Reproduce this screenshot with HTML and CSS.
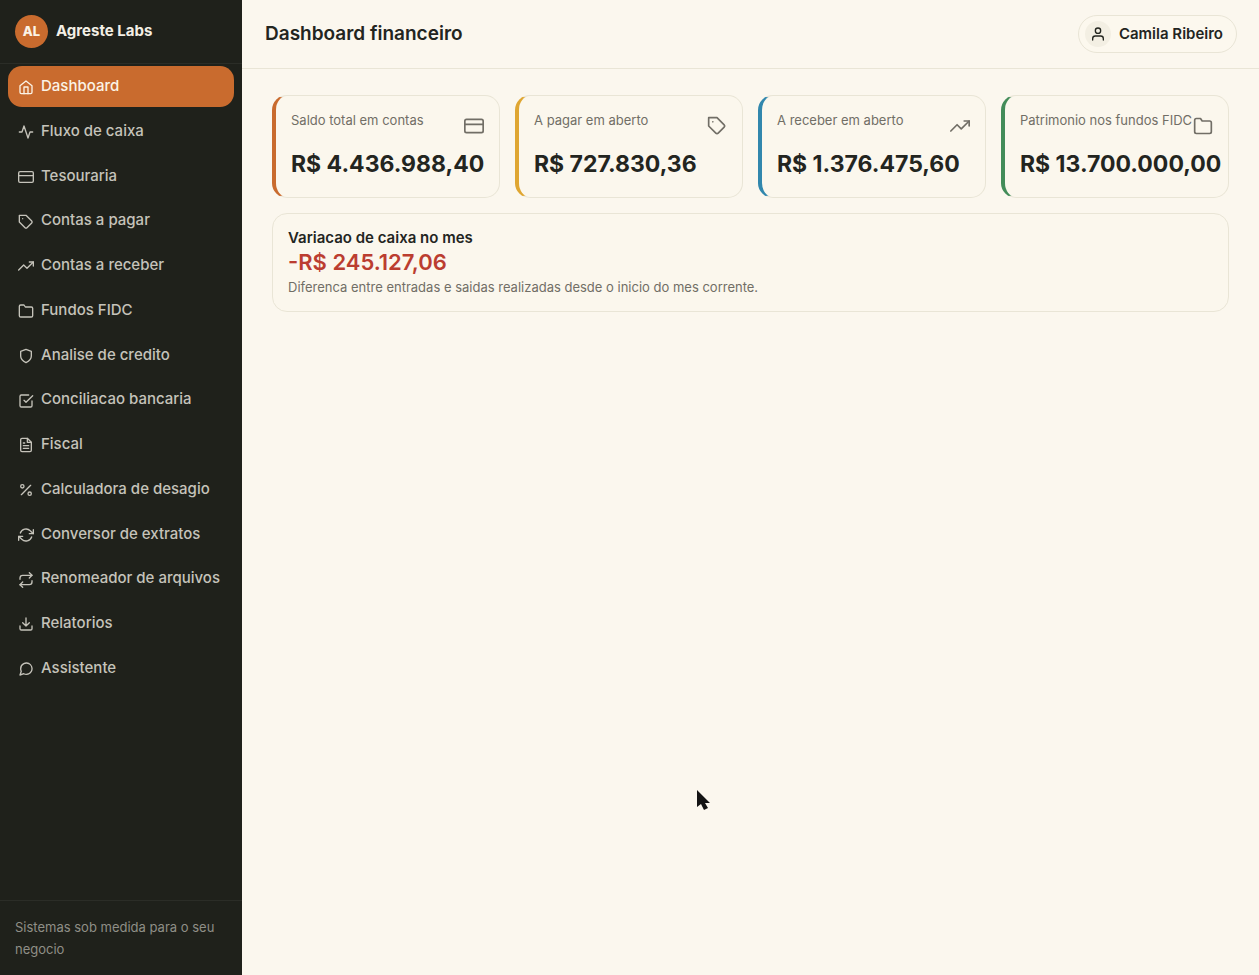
FILE: index.html
```html
<!DOCTYPE html>
<html lang="pt-BR">
<head>
  <meta charset="UTF-8" />
  <meta name="viewport" content="width=device-width, initial-scale=1.0" />
  <title>Dashboard financeiro - Agreste Labs</title>
  <link rel="stylesheet" href="styles.css">
</head>
<body>
  <div class="app">
    <aside class="sidebar">
      <div class="brand">
        <span class="brand-logo">AL</span>
        <span class="brand-name">Agreste Labs</span>
      </div>
      <nav class="nav">
        <a class="nav-link active" href="#dashboard" aria-current="page">
          <svg class="icon" viewBox="0 0 24 24"><path d="M3 10l9-7 9 7v10a2 2 0 0 1-2 2H5a2 2 0 0 1-2-2z"/><path d="M9 22V12h6v10"/></svg>
          Dashboard
        </a>
        <a class="nav-link" href="#fluxo">
          <svg class="icon" viewBox="0 0 24 24"><path d="M22 12h-4l-3 9L9 3l-3 9H2"/></svg>
          Fluxo de caixa
        </a>
        <a class="nav-link" href="#tesouraria">
          <svg class="icon" viewBox="0 0 24 24"><rect x="1" y="4" width="22" height="16" rx="2"/><path d="M1 10h22"/></svg>
          Tesouraria
        </a>
        <a class="nav-link" href="#pagar">
          <svg class="icon" viewBox="0 0 24 24"><path d="M20.59 13.41l-7.17 7.17a2 2 0 0 1-2.83 0L2 12V2h10l8.59 8.59a2 2 0 0 1 0 2.82z"/><path d="M7 7h.01"/></svg>
          Contas a pagar
        </a>
        <a class="nav-link" href="#receber">
          <svg class="icon" viewBox="0 0 24 24"><path d="M23 6l-9.500 9.500-5-5L1 18"/><path d="M17 6h6v6"/></svg>
          Contas a receber
        </a>
        <a class="nav-link" href="#fundos">
          <svg class="icon" viewBox="0 0 24 24"><path d="M22 19a2 2 0 0 1-2 2H4a2 2 0 0 1-2-2V5a2 2 0 0 1 2-2h5l2 3h9a2 2 0 0 1 2 2z"/></svg>
          Fundos FIDC
        </a>
        <a class="nav-link" href="#credito">
          <svg class="icon" viewBox="0 0 24 24"><path d="M12 22s8-4 8-10V5l-8-3-8 3v7c0 6 8 10 8 10z"/></svg>
          Analise de credito
        </a>
        <a class="nav-link" href="#conciliacao">
          <svg class="icon" viewBox="0 0 24 24"><path d="M9 11l3 3L22 4"/><path d="M21 12v7a2 2 0 0 1-2 2H5a2 2 0 0 1-2-2V5a2 2 0 0 1 2-2h11"/></svg>
          Conciliacao bancaria
        </a>
        <a class="nav-link" href="#fiscal">
          <svg class="icon" viewBox="0 0 24 24"><path d="M14 2H6a2 2 0 0 0-2 2v16a2 2 0 0 0 2 2h12a2 2 0 0 0 2-2V8z"/><path d="M14 2v6h6M16 13H8M16 17H8M10 9H8"/></svg>
          Fiscal
        </a>
        <a class="nav-link" href="#desagio">
          <svg class="icon" viewBox="0 0 24 24"><path d="M19 5L5 19"/><circle cx="6.500" cy="6.500" r="2.500"/><circle cx="17.500" cy="17.500" r="2.500"/></svg>
          Calculadora de desagio
        </a>
        <a class="nav-link" href="#extratos">
          <svg class="icon" viewBox="0 0 24 24"><path d="M23 4v6h-6M1 20v-6h6"/><path d="M3.510 9a9 9 0 0 1 14.850-3.360L23 10M1 14l4.640 4.360A9 9 0 0 0 20.490 15"/></svg>
          Conversor de extratos
        </a>
        <a class="nav-link" href="#arquivos">
          <svg class="icon" viewBox="0 0 24 24"><path d="M17 1l4 4-4 4"/><path d="M3 11V9a4 4 0 0 1 4-4h14M7 23l-4-4 4-4"/><path d="M21 13v2a4 4 0 0 1-4 4H3"/></svg>
          Renomeador de arquivos
        </a>
        <a class="nav-link" href="#relatorios">
          <svg class="icon" viewBox="0 0 24 24"><path d="M21 15v4a2 2 0 0 1-2 2H5a2 2 0 0 1-2-2v-4M7 10l5 5 5-5M12 15V3"/></svg>
          Relatorios
        </a>
        <a class="nav-link" href="#assistente">
          <svg class="icon" viewBox="0 0 24 24"><path d="M21 11.500a8.380 8.380 0 0 1-.9 3.800 8.500 8.500 0 0 1-7.600 4.700 8.380 8.380 0 0 1-3.800-.9L3 21l1.900-5.700a8.380 8.380 0 0 1-.9-3.800 8.500 8.500 0 0 1 4.700-7.600 8.380 8.380 0 0 1 3.800-.9h.5a8.480 8.480 0 0 1 8 8z"/></svg>
          Assistente
        </a>
      </nav>
      <div class="sidebar-footer">Sistemas sob medida para o seu negocio</div>
    </aside>

    <div class="main">
      <header class="topbar">
        <h1>Dashboard financeiro</h1>
        <button class="user" type="button">
          <span class="user-avatar">
            <svg class="icon" viewBox="0 0 24 24"><path d="M20 21v-2a4 4 0 0 0-4-4H8a4 4 0 0 0-4 4v2"/><circle cx="12" cy="7" r="4"/></svg>
          </span>
          Camila Ribeiro
        </button>
      </header>

      <main class="content">
        <section class="cards">
          <div class="card card-orange">
            <div class="card-head">
              <span>Saldo total em contas</span>
              <svg class="icon" viewBox="0 0 24 24"><rect x="1" y="4" width="22" height="16" rx="2"/><path d="M1 10h22"/></svg>
            </div>
            <div class="value">R$ 4.436.988,40</div>
          </div>
          <div class="card card-yellow">
            <div class="card-head">
              <span>A pagar em aberto</span>
              <svg class="icon" viewBox="0 0 24 24"><path d="M20.59 13.41l-7.17 7.17a2 2 0 0 1-2.83 0L2 12V2h10l8.59 8.59a2 2 0 0 1 0 2.82z"/><path d="M7 7h.01"/></svg>
            </div>
            <div class="value">R$ 727.830,36</div>
          </div>
          <div class="card card-blue">
            <div class="card-head">
              <span>A receber em aberto</span>
              <svg class="icon" viewBox="0 0 24 24"><path d="M23 6l-9.500 9.500-5-5L1 18"/><path d="M17 6h6v6"/></svg>
            </div>
            <div class="value">R$ 1.376.475,60</div>
          </div>
          <div class="card card-green">
            <div class="card-head">
              <span>Patrimonio nos fundos FIDC</span>
              <svg class="icon" viewBox="0 0 24 24"><path d="M22 19a2 2 0 0 1-2 2H4a2 2 0 0 1-2-2V5a2 2 0 0 1 2-2h5l2 3h9a2 2 0 0 1 2 2z"/></svg>
            </div>
            <div class="value">R$ 13.700.000,00</div>
          </div>
        </section>

        <section class="panel">
          <h2>Variacao de caixa no mes</h2>
          <div class="variation">-R$ 245.127,06</div>
          <p>Diferenca entre entradas e saidas realizadas desde o inicio do mes corrente.</p>
        </section>
      </main>
    </div>
  </div>

  <svg class="cursor" viewBox="0 0 14 21"><path d="M1 1v17l4-3 3 6 4-2-3-5h5z"/></svg>
</body>
</html>
```
FILE: styles.css
```css
:root {
  --dark: #1f211b;
  --cream: #fbf7ee;
  --border: #e9e5d6;
  --ink: #23251f;
  --muted: #716e66;
  --orange: #c96b2e;
}
* {
  box-sizing: border-box;
}
body {
  margin: 0;
  font-family: Inter, sans-serif;
  font-size: 15px;
  line-height: 1.65;
  background: var(--cream);
  color: var(--ink);
}
h1, h2, p {
  margin: 0;
}
.app {
  display: flex;
  min-height: 100vh;
}
.icon {
  flex: none;
  width: 16px;
  height: 16px;
  fill: none;
  stroke: currentColor;
  stroke-width: 2;
  stroke-linecap: round;
  stroke-linejoin: round;
}

/* Sidebar */
.sidebar {
  display: flex;
  flex-direction: column;
  flex: none;
  width: 242px;
  background: var(--dark);
}
.brand {
  display: flex;
  align-items: center;
  gap: 8px;
  padding: 15px;
  border-bottom: 1px solid #2b2d27;
}
.brand-logo {
  display: flex;
  align-items: center;
  justify-content: center;
  width: 33px;
  height: 33px;
  border-radius: 50%;
  background: var(--orange);
  color: #fbf3e6;
  font-size: 13px;
  font-weight: 800;
}
.brand-name {
  color: #f3efe5;
  font-weight: 700;
}
.nav {
  display: flex;
  flex-direction: column;
  flex: 1;
  gap: 4px;
  padding: 2px 8px;
}
.nav-link {
  display: flex;
  align-items: center;
  gap: 7px;
  padding: 8px 10px;
  border-radius: 14px;
  color: #c5c3ba;
  font-weight: 500;
  text-decoration: none;
  white-space: nowrap;
}
.nav-link .icon {
  margin-top: 2px;
}
.nav-link.active {
  background: var(--orange);
  color: #fbf3e6;
}
.sidebar-footer {
  padding: 15px;
  border-top: 1px solid #2b2d27;
  color: #8f8f87;
  font-size: 13px;
  line-height: 22px;
}

/* Top bar */
.main {
  flex: 1;
  min-width: 0;
}
.topbar {
  display: flex;
  align-items: center;
  justify-content: space-between;
  padding: 15px 22px 15px 23px;
  border-bottom: 1px solid var(--border);
}
.topbar h1 {
  font-size: 19px;
  font-weight: 600;
  line-height: 24px;
}
.user {
  display: flex;
  align-items: center;
  gap: 8px;
  padding: 5px 13px 5px 6px;
  border: 1px solid var(--border);
  border-radius: 20px;
  background: #fcf8ee;
  color: var(--ink);
  font: inherit;
  font-weight: 600;
}
.user-avatar {
  display: flex;
  align-items: center;
  justify-content: center;
  width: 26px;
  height: 26px;
  border-radius: 50%;
  background: #f3efe3;
}

/* Cards */
.content {
  display: grid;
  gap: 15px;
  padding: 26px 30px;
}
.cards {
  display: grid;
  grid-template-columns: repeat(4, minmax(0, 1fr));
  gap: 15px;
}
.card,
.panel {
  border: 1px solid var(--border);
  border-radius: 15px;
  background: #fbf7ed;
}
.card {
  padding: 15px;
  border-left-width: 4px;
}
.card-orange {
  border-left-color: #c96b2e;
}
.card-yellow {
  border-left-color: #dfa632;
}
.card-blue {
  border-left-color: #3187ad;
}
.card-green {
  border-left-color: #438c59;
}
.card-head {
  display: flex;
  justify-content: space-between;
  height: 35px;
  color: var(--muted);
  font-size: 13px;
  line-height: 18px;
  white-space: nowrap;
}
.card-head .icon {
  width: 20px;
  height: 20px;
  margin-top: 5px;
}
.value {
  font-size: 23px;
  font-weight: 700;
  line-height: 36px;
  white-space: nowrap;
}
.panel {
  padding: 15px;
}
.panel h2 {
  font-size: 15px;
  font-weight: 600;
  line-height: 18px;
}
.variation {
  color: #bb3d30;
  font-size: 22px;
  font-weight: 600;
  line-height: 31px;
}
.panel p {
  color: var(--muted);
  font-size: 13px;
  line-height: 18px;
}

.cursor {
  position: fixed;
  left: 696px;
  top: 789px;
  width: 14px;
  height: 21px;
  fill: #141414;
  pointer-events: none;
}
```
